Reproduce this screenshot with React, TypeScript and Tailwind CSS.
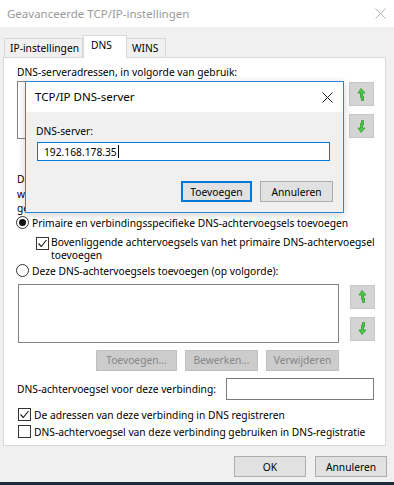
import type { ReactNode } from 'react';

function ArrowUp() {
  return (
    <svg width="9" height="13" viewBox="0 0 9 13">
      <path d="M4 0.5 L8 5 L5.5 5 L5.5 8 L6.5 8 L6.5 12.5 L4.5 12.5 L4.5 9.5 L3.5 9.5 L3.5 5 L1 5 Z" fill="#4cc84c" stroke="#2e9a2e" strokeWidth="0.8" strokeLinejoin="round" />
    </svg>
  );
}

function ArrowDown() {
  return (
    <svg width="9" height="13" viewBox="0 0 9 13">
      <path d="M4 12.5 L8 8 L5.5 8 L5.5 5 L6.5 5 L6.5 0.5 L4.5 0.5 L4.5 3.5 L3.5 3.5 L3.5 8 L1 8 Z" fill="#4cc84c" stroke="#2e9a2e" strokeWidth="0.8" strokeLinejoin="round" />
    </svg>
  );
}

function MoveButtons({ first, second }: { first: string; second: string }) {
  return (
    <div className="flex flex-col ml-[11px]">
      <div className={`w-[25px] h-[24px] bg-[#d4d4d4] border border-[#c8c8c8] flex items-center justify-center ${first}`}>
        <ArrowUp />
      </div>
      <div className={`w-[25px] h-[24px] bg-[#d4d4d4] border border-[#c8c8c8] flex items-center justify-center ${second}`}>
        <ArrowDown />
      </div>
    </div>
  );
}

function Radio({ checked }: { checked?: boolean }) {
  return (
    <span className="w-[13px] h-[13px] rounded-full border border-[#333333] bg-white flex items-center justify-center shrink-0">
      {checked && <span className="w-[7px] h-[7px] rounded-full bg-[#111111]" />}
    </span>
  );
}

function Check({ checked }: { checked?: boolean }) {
  return (
    <span className="w-[13px] h-[13px] border border-[#333333] bg-white flex items-center justify-center shrink-0">
      {checked && (
        <svg width="11" height="11" viewBox="0 0 11 11">
          <path d="M1.5 5.5 L4.3 8.5 L9.5 2" fill="none" stroke="#111111" strokeWidth="1.1" />
        </svg>
      )}
    </span>
  );
}

function WinButton({ children, className, disabled, primary }: { children: ReactNode; className: string; disabled?: boolean; primary?: boolean }) {
  let look = 'bg-[#e1e1e1] border border-[#adadad] text-black';
  if (disabled) look = 'bg-[#cccccc] border border-[#bfbfbf] text-[#858585]';
  if (primary) look = 'bg-[#e1e1e1] border-2 border-[#0078d7] text-black';
  return <div className={`h-[21px] flex items-center justify-center ${look} ${className}`}>{children}</div>;
}

export default function App() {
  return (
    <div className="relative w-[394px] h-[485px] overflow-hidden bg-[#f0f0f0] text-[10.25px] text-black font-['Noto_Sans',sans-serif] leading-[14px]">
      {/* titelbalk */}
      <div className="h-[27px] bg-white flex items-center justify-between pl-[7px] pr-[7px]">
        <span className="text-[11.5px] text-[#9a9a9a]">Geavanceerde TCP/IP-instellingen</span>
        <svg width="11" height="11" viewBox="0 0 11 11" className="mr-[1px]">
          <path d="M0.5 0.5 L10.5 10.5 M10.5 0.5 L0.5 10.5" stroke="#b4b4b4" strokeWidth="1" />
        </svg>
      </div>

      {/* tabbladen */}
      <div className="flex items-end pl-[4px] pt-[8px] h-[30px]">
        <div className="h-[19px] w-[79px] pl-[5px] flex items-center border border-b-0 border-[#d9d9d9] bg-[#f0f0f0]">IP-instellingen</div>
        <div className="relative z-10 h-[23px] w-[44px] pl-[7px] pt-[2px] border border-b-0 border-[#d9d9d9] bg-white -mb-[1px]">DNS</div>
        <div className="h-[19px] w-[39px] pl-[5px] flex items-center border border-b-0 border-l-0 border-[#d9d9d9] bg-[#f0f0f0]">WINS</div>
      </div>

      {/* paneel */}
      <div className="ml-[3px] w-[383px] h-[389px] bg-white border border-[#d9d9d9] pl-[13px] flex flex-col">
        <div className="mt-[7px] h-[14px]">DNS-serveradressen, in volgorde van gebruik:</div>
        <div className="mt-[2px] flex">
          <div className="w-[321px] h-[58px] border border-[#828282] bg-white" />
          <MoveButtons first="mt-[1px]" second="mt-[8px]" />
        </div>
        {/* tekst die grotendeels achter het dialoogvenster valt */}
        <div className="mt-[33px] w-[300px] leading-[14.5px] whitespace-nowrap overflow-hidden">
          <div>De volgende drie instellingen worden toegepast</div>
          <div>waarvoor TCP/IP is ingeschakeld. Voor omzetting</div>
          <div>gekwalificeerde namen:</div>
        </div>
        <div className="h-[14px] flex items-center gap-[3px] -ml-[1px]">
          <Radio checked />
          <span>Primaire en verbindingsspecifieke DNS-achtervoegsels toevoegen</span>
        </div>
        <div className="mt-[6px] flex gap-[2px] pl-[19px] leading-[13px]">
          <span className="mt-[1px]"><Check checked /></span>
          <span>Bovenliggende achtervoegsels van het primaire DNS-achtervoegsel<br />toevoegen</span>
        </div>
        <div className="mt-[2px] h-[14px] flex items-center gap-[3px] -ml-[1px]">
          <Radio />
          <span>Deze DNS-achtervoegsels toevoegen (op volgorde):</span>
        </div>
        <div className="mt-[6px] flex">
          <div className="w-[321px] h-[59px] border border-[#828282] bg-white ml-[1px]" />
          <MoveButtons first="mt-[1px]" second="mt-[8px]" />
        </div>
        <div className="mt-[7px] w-[322px] flex justify-end gap-[8px]">
          <WinButton disabled className="w-[81px] h-[20px]">Toevoegen...</WinButton>
          <WinButton disabled className="w-[73px] h-[20px]">Bewerken...</WinButton>
          <WinButton disabled className="w-[73px] h-[20px]">Verwijderen</WinButton>
        </div>
        <div className="mt-[7px] flex items-center">
          <span className="w-[209px]">DNS-achtervoegsel voor deze verbinding:</span>
          <div className="w-[148px] h-[22px] border border-[#7a7a7a] bg-white" />
        </div>
        <div className="mt-[8px] h-[14px] flex items-center gap-[3px] ml-[1px]">
          <Check checked />
          <span>De adressen van deze verbinding in DNS registreren</span>
        </div>
        <div className="mt-[3px] h-[14px] flex items-center gap-[3px] ml-[1px]">
          <Check />
          <span>DNS-achtervoegsel van deze verbinding gebruiken in DNS-registratie</span>
        </div>
      </div>

      {/* knoppen onderaan */}
      <div className="mt-[10px] flex justify-end gap-[9px] pr-[7px]">
        <WinButton className="w-[72px]">OK</WinButton>
        <WinButton className="w-[72px]">Annuleren</WinButton>
      </div>
      <div className="absolute left-0 right-0 bottom-0 h-[3px] bg-[#1d2a3a]" />

      {/* dialoogvenster erboven */}
      <div className="absolute left-[25px] top-[81px] w-[319px] h-[132px] border border-[#2b85d4] bg-[#f0f0f0] shadow-[0_2px_8px_rgba(0,0,0,0.18)] flex flex-col">
        <div className="h-[30px] bg-white flex items-center justify-between pl-[9px] pr-[10px]">
          <span className="text-[11.5px]">TCP/IP DNS-server</span>
          <svg width="11" height="11" viewBox="0 0 11 11">
            <path d="M0.5 0.5 L10.5 10.5 M10.5 0.5 L0.5 10.5" stroke="#222222" strokeWidth="1" />
          </svg>
        </div>
        <div className="pl-[10px] mt-[12px]">DNS-server:</div>
        <div className="ml-[11px] mt-[4px] w-[293px] h-[19px] border border-[#0078d7] bg-white flex items-center pl-[6px]">
          <span>192.168.178.35</span>
          <span className="w-px h-[13px] bg-black ml-[1px]" />
        </div>
        <div className="mt-[20px] flex gap-[8px] pl-[155px]">
          <WinButton primary className="w-[71px]">Toevoegen</WinButton>
          <WinButton className="w-[73px]">Annuleren</WinButton>
        </div>
      </div>
    </div>
  );
}
